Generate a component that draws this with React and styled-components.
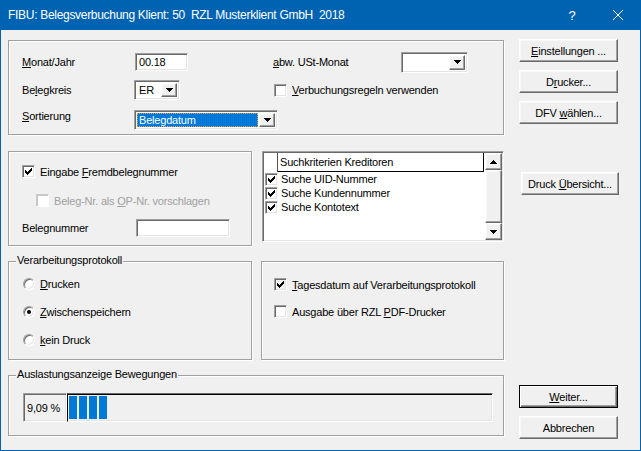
import React from 'react';
import styled, { createGlobalStyle, css } from 'styled-components';

const GlobalStyle = createGlobalStyle`
  html, body { margin: 0; padding: 0; background: #fff; }
  body {
    font-family: "Liberation Sans", Arial, sans-serif;
    font-size: 11px;
    letter-spacing: -0.2px;
    color: #000;
  }
  u { text-underline-offset: 1px; }
`;

// classic 3d edges
const raised = css`
  border: 1px solid;
  border-color: #fff #696969 #696969 #fff;
  box-shadow: inset -1px -1px 0 #a0a0a0, inset 1px 1px 0 #f8f8f8;
  background: #f0f0f0;
`;

const sunken = css`
  border: 1px solid;
  border-color: #a0a0a0 #fff #fff #a0a0a0;
  box-shadow: inset 1px 1px 0 #696969, inset -1px -1px 0 #e3e3e3;
`;

const Window = styled.div`
  width: 641px;
  height: 451px;
  display: flex;
  flex-direction: column;
  overflow: hidden;
`;

const TitleBar = styled.div`
  height: 30px;
  flex: none;
  background: #0063b1;
  color: #fff;
  display: flex;
  align-items: center;
  font-size: 12px;
`;

const Title = styled.div`
  flex: 1;
  padding-left: 8px;
  white-space: pre;
  letter-spacing: -0.3px;
`;

const CaptionBtn = styled.div`
  width: 46px;
  height: 30px;
  display: flex;
  align-items: center;
  justify-content: center;
  font-size: 13px;
`;

const Body = styled.div`
  flex: 1;
  background: #f0f0f0;
  border: 1px solid #0063b1;
  border-top: none;
  padding-left: 7px;
  display: flex;
  flex-direction: column;
`;

const Row = styled.div`
  display: flex;
  align-items: flex-start;
  margin-top: ${p => p.$mt}px;
`;

const Panel = styled.div`
  position: relative;
  box-sizing: border-box;
  flex: none;
  width: ${p => p.$w}px;
  height: ${p => p.$h}px;
  margin-top: ${p => p.$mt || 0}px;
  margin-left: ${p => p.$ml || 0}px;
  border: 1px solid #a0a0a0;
  box-shadow: inset 1px 1px 0 #fff, 1px 1px 0 #fff;
  padding: ${p => p.$pad || '0'};
`;

const Legend = styled.span`
  position: absolute;
  top: -8px;
  left: 7px;
  padding: 0 1px;
  line-height: 13px;
  background: #f0f0f0;
`;

const ButtonCol = styled.div`
  display: flex;
  flex-direction: column;
  gap: 8px;
  margin-left: ${p => p.$ml || 15}px;
  margin-top: ${p => p.$mt || 0}px;
`;

const Button = styled.div`
  ${raised};
  box-sizing: border-box;
  width: ${p => p.$w || 99}px;
  height: 23px;
  display: flex;
  align-items: center;
  justify-content: center;
  ${p => p.$default && css`
    border: 1px solid #000;
    box-shadow: inset 1px 1px 0 #fff, inset -1px -1px 0 #696969, inset -2px -2px 0 #a0a0a0;
  `}
`;

const FormRow = styled.div`
  display: flex;
  align-items: center;
  height: ${p => p.$h}px;
  margin-top: ${p => p.$mt}px;
`;

const Cell = styled.div`
  flex: none;
  width: ${p => p.$w}px;
  display: flex;
  align-items: center;
  align-self: ${p => p.$self || 'auto'};
  line-height: 13px;
  padding-left: ${p => p.$pl || 0}px;
  box-sizing: border-box;
`;

const TextBox = styled.div`
  ${sunken};
  box-sizing: border-box;
  background: #fff;
  width: ${p => p.$w}px;
  height: ${p => p.$h || 18}px;
  padding-left: 3px;
  display: flex;
  align-items: center;
`;

const Combo = styled.div`
  ${sunken};
  box-sizing: border-box;
  background: #fff;
  width: ${p => p.$w}px;
  height: ${p => p.$h || 20}px;
  padding: 2px;
  display: flex;
`;

const ComboValue = styled.div`
  flex: 1;
  display: flex;
  align-items: center;
  padding-left: 2px;
  margin-right: 1px;
  ${p => p.$sel && css`
    background: #0078d7;
    color: #fff;
    outline: 1px dotted #e8a050;
    outline-offset: -1px;
  `}
`;

const ArrowBtn = styled.div`
  ${raised};
  box-sizing: border-box;
  flex: none;
  width: 16px;
  display: flex;
  align-items: center;
  justify-content: center;
`;

const Check = styled.span`
  ${sunken};
  flex: none;
  box-sizing: border-box;
  width: 13px;
  height: 13px;
  background: ${p => (p.$gray ? '#f0f0f0' : '#fff')};
  display: flex;
  align-items: center;
  justify-content: center;
  ${p => p.$disabled && css`
    border-color: #c8c8c8 #fff #fff #c8c8c8;
    box-shadow: inset 1px 1px 0 #c8c8c8;
  `}
`;

const Radio = styled.span`
  flex: none;
  box-sizing: border-box;
  width: 12px;
  height: 12px;
  border-radius: 50%;
  border: 1px solid;
  border-color: #a0a0a0 #fff #fff #a0a0a0;
  box-shadow: inset 1px 1px 0 #696969, inset -1px -1px 0 #e3e3e3;
  background: #fff;
  display: flex;
  align-items: center;
  justify-content: center;
  &::after {
    content: '';
    width: 4px;
    height: 4px;
    border-radius: 50%;
    background: #000;
    display: ${p => (p.$on ? 'block' : 'none')};
  }
`;

const Option = styled.div`
  display: flex;
  align-items: center;
  gap: 5px;
  height: ${p => p.$h || 13}px;
  margin-top: ${p => p.$mt || 0}px;
  padding-left: ${p => p.$pl || 0}px;
  color: ${p => (p.$disabled ? '#a0a0a0' : '#000')};
`;

const ListBox = styled.div`
  ${sunken};
  box-sizing: border-box;
  flex: none;
  width: 242px;
  height: 91px;
  margin-left: 10px;
  padding: 1px;
  background: #fff;
  display: flex;
`;

const ListMain = styled.div`
  flex: 1;
  display: flex;
  flex-direction: column;
  margin-right: 1px;
`;

const ListHeader = styled.div`
  display: flex;
  height: 19px;
`;

const HeadCheck = styled.div`
  width: 13px;
  border-right: 1px solid #505050;
`;

const HeadText = styled.div`
  flex: 1;
  border-right: 1px solid #000;
  border-bottom: 1px solid #000;
  padding-left: 2px;
  display: flex;
  align-items: center;
`;

const ListItem = styled.div`
  display: flex;
  align-items: center;
  gap: 3px;
  height: 14px;
  padding-left: 1px;
`;

const ScrollBar = styled.div`
  width: 17px;
  display: flex;
  flex-direction: column;
  background: #f0f0f0;
`;

const ScrollBtn = styled.div`
  ${raised};
  box-sizing: border-box;
  height: 17px;
  flex: ${p => (p.$grow ? 1 : 'none')};
  display: flex;
  align-items: center;
  justify-content: center;
`;

const Meter = styled.div`
  display: flex;
  height: 29px;
  margin: 17px 0 0 14px;
`;

const MeterLabel = styled.div`
  ${sunken};
  box-sizing: border-box;
  width: 44px;
  padding-left: 3px;
  display: flex;
  align-items: center;
  background: #f0f0f0;
`;

const MeterBar = styled.div`
  box-sizing: border-box;
  width: 426px;
  border: 1px solid;
  border-color: #696969 #fff #fff #000;
  box-shadow: inset 0 1px 0 #000, inset -1px -1px 0 #e3e3e3;
  padding: 2px 0 2px 1px;
  display: flex;
  gap: 2px;
  background: #f0f0f0;
`;

const Block = styled.div`
  width: 8px;
  background: #0078d7;
`;

const CHECK = ['......X', '.....XX', 'X...XXX', 'XX.XXX.', 'XXXXX..', '.XXX...', '..X....'];

const CheckMark = () => (
  <svg width="7" height="7" viewBox="0 0 7 7" shapeRendering="crispEdges">
    {CHECK.flatMap((row, y) =>
      row.split('').map((c, x) => (c === 'X' ? <rect key={`${x}-${y}`} x={x} y={y} width="1" height="1" fill="#000" /> : null))
    )}
  </svg>
);

const Arrow = ({ up }) => (
  <svg width="7" height="4" viewBox="0 0 7 4" shapeRendering="crispEdges">
    <path d={up ? 'M3 0h1v1h1v1h1v1h1v1H0V3h1V2h1V1h1z' : 'M0 0h7v1H6v1H5v1H4v1H3V3H2V2H1V1H0z'} fill="#000" />
  </svg>
);

const CheckBox = ({ checked, gray, disabled }) => (
  <Check $gray={gray} $disabled={disabled}>{checked && <CheckMark />}</Check>
);

const ComboBox = ({ w, h, value, sel }) => (
  <Combo $w={w} $h={h}>
    <ComboValue $sel={sel}>{value}</ComboValue>
    <ArrowBtn><Arrow /></ArrowBtn>
  </Combo>
);

export default function App() {
  return (
    <>
      <GlobalStyle />
      <Window>
        <TitleBar>
          <Title>FIBU: Belegsverbuchung Klient: 50  RZL Musterklient GmbH  2018</Title>
          <CaptionBtn>?</CaptionBtn>
          <CaptionBtn>
            <svg width="10" height="10" viewBox="0 0 10 10">
              <path d="M0 0L10 10M10 0L0 10" stroke="#fff" strokeWidth="1" />
            </svg>
          </CaptionBtn>
        </TitleBar>
        <Body>
          <Row $mt={9}>
            <Panel $w={496} $h={95} $mt={1} $pad="0 0 0 13px">
              <FormRow $h={22} $mt={10}>
                <Cell $w={112}><span><u>M</u>onat/Jahr</span></Cell>
                <Cell $w={139} $pl={1}><TextBox $w={53}>00.18</TextBox></Cell>
                <Cell $w={128}><span><u>a</u>bw. USt-Monat</span></Cell>
                <ComboBox w={67} h={21} value="" />
              </FormRow>
              <FormRow $h={20} $mt={7}>
                <Cell $w={112}><span>Be<u>l</u>egkreis</span></Cell>
                <Cell $w={139}><ComboBox w={46} value="ER" /></Cell>
                <Cell $w={200} $pl={1}>
                  <Option><CheckBox /><span><u>V</u>erbuchungsregeln verwenden</span></Option>
                </Cell>
              </FormRow>
              <FormRow $h={20} $mt={10}>
                <Cell $w={112} $self="flex-start"><span><u>S</u>ortierung</span></Cell>
                <ComboBox w={144} value="Belegdatum" sel />
              </FormRow>
            </Panel>
            <ButtonCol>
              <Button><span><u>E</u>instellungen ...</span></Button>
              <Button><span>D<u>r</u>ucker...</span></Button>
              <Button><span>DFV <u>w</u>ählen...</span></Button>
            </ButtonCol>
          </Row>

          <Row $mt={16}>
            <Panel $w={244} $h={95} $pad="13px 0 0 13px">
              <Option><CheckBox checked /><span>Eingabe <u>F</u>remdbelegnummer</span></Option>
              <Option $mt={16} $pl={14} $disabled>
                <CheckBox disabled /><span>Beleg-Nr. als <u>O</u>P-Nr. vorschlagen</span>
              </Option>
              <FormRow $h={18} $mt={12}>
                <Cell $w={114}><span>Bele<u>g</u>nummer</span></Cell>
                <TextBox $w={94} />
              </FormRow>
            </Panel>
            <ListBox>
              <ListMain>
                <ListHeader>
                  <HeadCheck />
                  <HeadText>Suchkriterien Kreditoren</HeadText>
                </ListHeader>
                {['Suche UID-Nummer', 'Suche Kundennummer', 'Suche Kontotext'].map(t => (
                  <ListItem key={t}><CheckBox checked /><span>{t}</span></ListItem>
                ))}
              </ListMain>
              <ScrollBar>
                <ScrollBtn><Arrow up /></ScrollBtn>
                <ScrollBtn $grow />
                <ScrollBtn><Arrow /></ScrollBtn>
              </ScrollBar>
            </ListBox>
            <ButtonCol $ml={17} $mt={21}>
              <Button $w={98}><span>Druck <u>Ü</u>bersicht...</span></Button>
            </ButtonCol>
          </Row>

          <Row $mt={15}>
            <Panel $w={244} $h={99} $pad="16px 0 0 14px">
              <Legend>Verarbeitungsprotokoll</Legend>
              <Option $h={12}><Radio /><span><u>D</u>rucken</span></Option>
              <Option $h={12} $mt={16}><Radio $on /><span><u>Z</u>wischenspeichern</span></Option>
              <Option $h={12} $mt={16}><Radio /><span><u>k</u>ein Druck</span></Option>
            </Panel>
            <Panel $w={243} $h={99} $ml={9} $pad="16px 0 0 12px">
              <Option><CheckBox checked gray /><span><u>T</u>agesdatum auf Verarbeitungsprotokoll</span></Option>
              <Option $mt={14}><CheckBox /><span>Ausgabe über RZL <u>P</u>DF-Drucker</span></Option>
            </Panel>
          </Row>

          <Row $mt={15}>
            <Panel $w={496} $h={61}>
              <Legend>Auslastungsanzeige Bewegungen</Legend>
              <Meter>
                <MeterLabel>9,09 %</MeterLabel>
                <MeterBar>
                  <Block /><Block /><Block /><Block />
                </MeterBar>
              </Meter>
            </Panel>
            <ButtonCol $mt={10}>
              <Button $default><span><u>W</u>eiter...</span></Button>
              <Button>Abbrechen</Button>
            </ButtonCol>
          </Row>
        </Body>
      </Window>
    </>
  );
}
